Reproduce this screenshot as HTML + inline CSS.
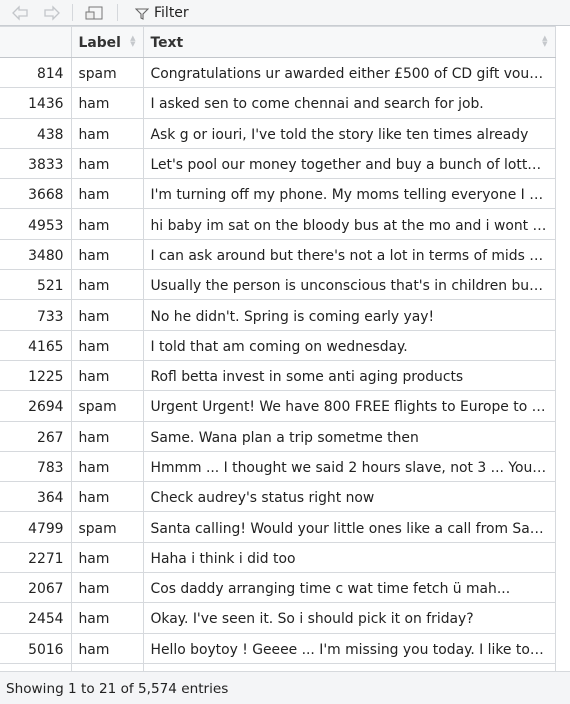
<!DOCTYPE html>
<html><head><style>
*{margin:0;padding:0;box-sizing:border-box}
body{width:570px;height:704px;overflow:hidden;background:#fff;font-family:"DejaVu Sans","Liberation Sans",sans-serif;font-size:13px;color:#222;position:relative}
.tb{position:absolute;left:0;top:0;width:570px;height:26px;background:#f5f6f7;border-bottom:1px solid #c9cdd2}
.sep{position:absolute;top:4px;width:1px;height:17px;background:#d5d8dc}
.filter{position:absolute;left:154px;top:5px;font-size:14px;color:#222}
table{position:absolute;left:0;top:26px;border-collapse:collapse;table-layout:fixed;width:555px}
td,th{border:1px solid #d6d9dd;height:30.3px;white-space:nowrap;overflow:hidden;text-overflow:ellipsis;padding:3px 7px 0;font-weight:normal;font-size:13.9px}
th{height:31px;background:#f7f8f9;text-align:left;font-weight:bold;color:#333;border-bottom:1px solid #c2c6cb;position:relative;padding-top:1px}
td:first-child{text-align:right}
tr td:first-child,tr th:first-child{border-left:none}
.ft{position:absolute;left:0;top:671px;width:570px;height:33px;background:#f4f5f7;border-top:1px solid #d6d9dd;padding:9px 0 0 6px;font-size:13.6px;color:#222}
.sort{position:absolute;right:7px;top:8px;color:#c5c8cc;font-size:7px;line-height:6px}
</style></head><body>
<div class="tb">
<svg width="60" height="26" style="position:absolute;left:8px;top:0" fill="none" stroke="#c3c6ca" stroke-width="1.3">
<path d="M5 13l6-6v3h8v6h-8v3z"/><path d="M51 13l-6-6v3h-8v6h8v3z"/></svg>
<div class="sep" style="left:72px"></div>
<svg width="24" height="22" style="position:absolute;left:83px;top:3px" fill="none" stroke="#777" stroke-width="1"><rect x="6" y="4" width="13" height="12"/><rect x="3" y="9" width="8" height="7" fill="#eee"/></svg>
<div class="sep" style="left:117px"></div>
<svg width="14" height="14" style="position:absolute;left:135px;top:7px" fill="none" stroke="#666" stroke-width="1.1"><path d="M1 2h12l-5 5v5l-2-1V7z"/></svg>
<div class="filter">Filter</div>
</div>
<table>
<colgroup><col style="width:71px"><col style="width:72px"><col style="width:412px"></colgroup>
<tr><th></th><th>Label<span class="sort">▲<br>▼</span></th><th>Text<span class="sort">▲<br>▼</span></th></tr>
<tr><td>814</td><td>spam</td><td>Congratulations ur awarded either £500 of CD gift vouchers</td></tr>
<tr><td>1436</td><td>ham</td><td>I asked sen to come chennai and search for job.</td></tr>
<tr><td>438</td><td>ham</td><td>Ask g or iouri, I've told the story like ten times already</td></tr>
<tr><td>3833</td><td>ham</td><td>Let's pool our money together and buy a bunch of lottery tickets</td></tr>
<tr><td>3668</td><td>ham</td><td>I'm turning off my phone. My moms telling everyone I have cancer</td></tr>
<tr><td>4953</td><td>ham</td><td>hi baby im sat on the bloody bus at the mo and i wont be home</td></tr>
<tr><td>3480</td><td>ham</td><td>I can ask around but there's not a lot in terms of mids up here</td></tr>
<tr><td>521</td><td>ham</td><td>Usually the person is unconscious that's in children but in adults</td></tr>
<tr><td>733</td><td>ham</td><td>No he didn't. Spring is coming early yay!</td></tr>
<tr><td>4165</td><td>ham</td><td>I told that am coming on wednesday.</td></tr>
<tr><td>1225</td><td>ham</td><td>Rofl betta invest in some anti aging products</td></tr>
<tr><td>2694</td><td>spam</td><td>Urgent Urgent! We have 800 FREE flights to Europe to give away</td></tr>
<tr><td>267</td><td>ham</td><td>Same. Wana plan a trip sometme then</td></tr>
<tr><td>783</td><td>ham</td><td>Hmmm ... I thought we said 2 hours slave, not 3 ... You are late</td></tr>
<tr><td>364</td><td>ham</td><td>Check audrey's status right now</td></tr>
<tr><td>4799</td><td>spam</td><td>Santa calling! Would your little ones like a call from Santa Xmas</td></tr>
<tr><td>2271</td><td>ham</td><td>Haha i think i did too</td></tr>
<tr><td>2067</td><td>ham</td><td>Cos daddy arranging time c wat time fetch ü mah...</td></tr>
<tr><td>2454</td><td>ham</td><td>Okay. I've seen it. So i should pick it on friday?</td></tr>
<tr><td>5016</td><td>ham</td><td>Hello boytoy ! Geeee ... I'm missing you today. I like to send you</td></tr>
<tr><td>1</td><td>ham</td><td>x</td></tr>
</table>
<div class="ft">Showing 1 to 21 of 5,574 entries</div>
</body></html>
